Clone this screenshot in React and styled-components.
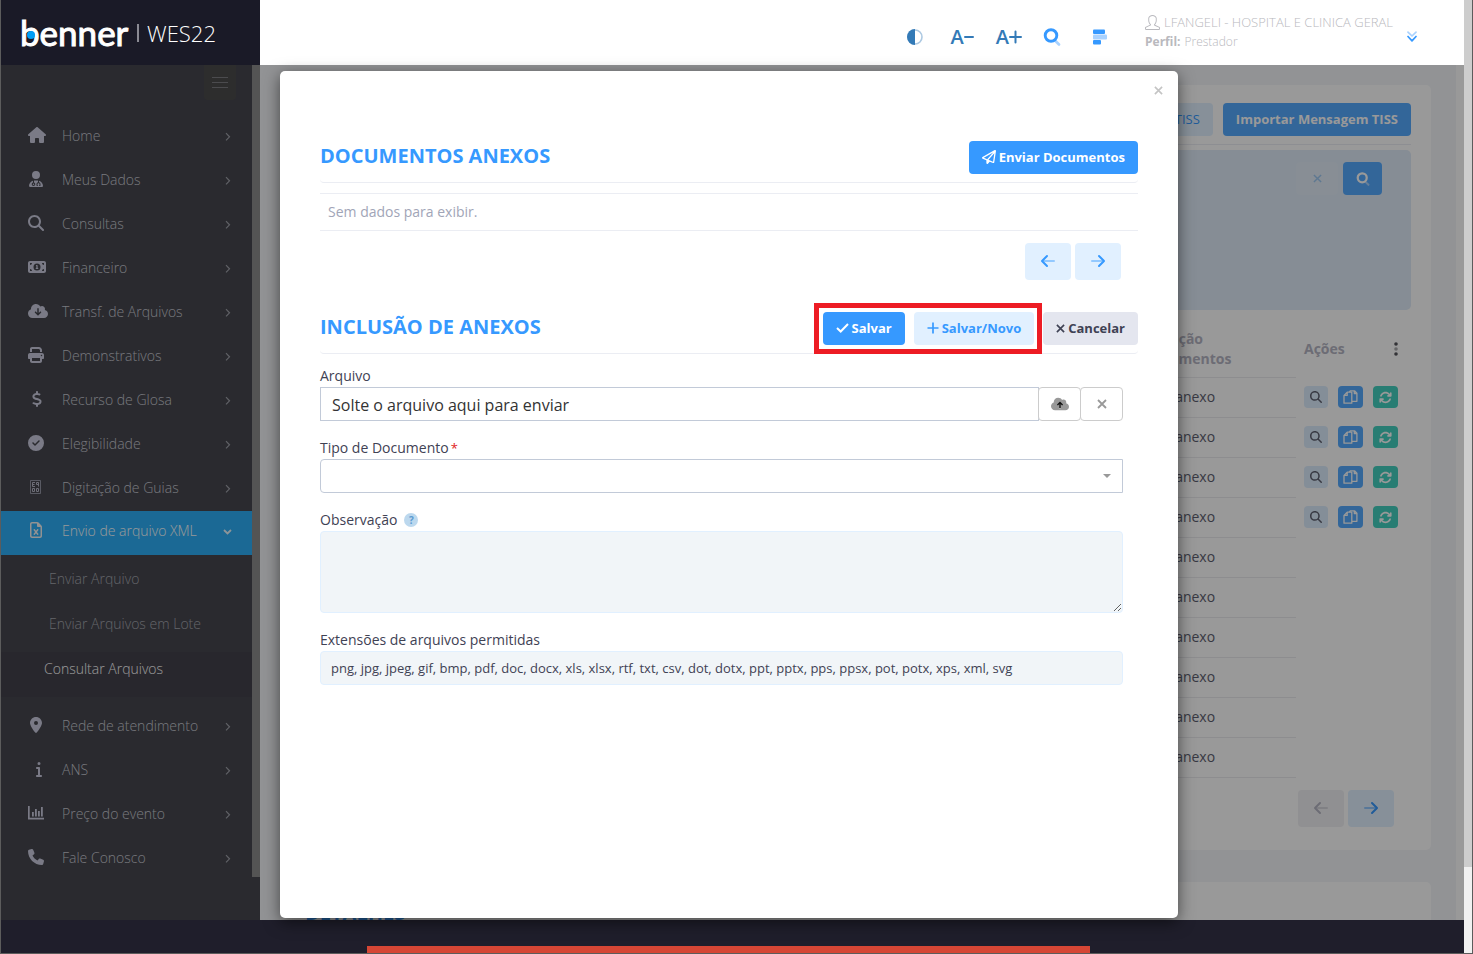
import React from "react";
import styled, { createGlobalStyle, css } from "styled-components";
import {
  FaHouse, FaUserDoctor, FaMagnifyingGlass, FaMoneyBill1, FaCloudArrowDown, FaPrint,
  FaDollarSign, FaCircleCheck, FaRegFileExcel, FaLocationDot, FaInfo, FaPhone,
  FaRegPaperPlane, FaCloudArrowUp, FaArrowsRotate,
} from "react-icons/fa6";
import { SlUser } from "react-icons/sl";

const Global = createGlobalStyle`
  *, *::before, *::after { box-sizing: border-box; }
  body { margin: 0; background: #fff; color: #3f4047; font: 400 14px/20px "Open Sans", "Noto Sans", sans-serif; }
  button, input, textarea, select { font: inherit; color: inherit; margin: 0; }
  button { cursor: pointer; }
  svg { display: block; flex: none; }
`;

const Frame = styled.div`
  display: flex;
  height: 100vh;
  min-height: 700px;
  border: solid #5c5c5c;
  border-width: 0 1px 1px 1px;
`;
const Page = styled.div`
  flex: 1;
  min-width: 0;
  display: flex;
  flex-direction: column;
`;
const Scrollbar = styled.div`
  width: 8px;
  background: #f1f1f1;
`;
const Thumb = styled.div`
  height: 91%;
  background: #cdcdcd;
`;

/* ---------- header ---------- */
const Header = styled.header`
  display: flex;
  height: 65px;
  flex: none;
`;
const Brand = styled.a`
  display: flex;
  align-items: center;
  justify-content: space-between;
  width: 259px;
  padding: 0 44px 0 19px;
  background: #1a1a27;
  color: #fff;
  text-decoration: none;
`;
const Logo = styled.span`
  position: relative;
  padding-bottom: 2px;
  font: 400 35px/40px Lato, sans-serif;
  -webkit-text-stroke: 1px #fff;
  &::after {
    content: "";
    position: absolute;
    left: 7px;
    top: 19px;
    width: 8px;
    height: 8px;
    border-radius: 50%;
    background: #009ef7;
  }
`;
const BrandRule = styled.span`
  width: 2px;
  height: 18px;
  background: #8a8a93;
`;
const BrandName = styled.span`
  font-size: 22px;
  line-height: 30px;
  font-weight: 300;
`;
const Tools = styled.div`
  flex: 1;
  display: flex;
  align-items: center;
  justify-content: flex-end;
  padding: 8px 47px 0 0;
  background: #fff;
`;
const ToolButton = styled.button`
  display: flex;
  align-items: center;
  height: 32px;
  padding: 0;
  margin-right: ${(p) => p.$gap}px;
  border: 0;
  background: none;
  color: ${(p) => (p.$bright ? "#3699ff" : "#337ab7")};
  font-size: 20px;
  font-weight: 600;
`;
const Account = styled.div`
  width: 262px;
  padding-bottom: 9px;
  color: #b9b9be;
  font-weight: 300;
  line-height: 20px;
`;
const AccountLine = styled.div`
  display: flex;
  align-items: center;
  gap: 4px;
  white-space: nowrap;
  font-size: ${(p) => (p.$small ? 12 : 13)}px;
`;
const Bold = styled.b`
  font-weight: 700;
`;

/* ---------- sidebar ---------- */
const Body = styled.div`
  position: relative;
  flex: 1;
  min-height: 0;
  display: flex;
  background: #f3f5f8;
`;
const Sidebar = styled.nav`
  display: flex;
  width: 259px;
  flex: none;
  background: #46474f;
  overflow: hidden;
`;
const Menu = styled.div`
  flex: 1;
`;
const SideTrack = styled.div`
  width: 8px;
  height: 95%;
  background: #8d8d8d;
`;
const Burger = styled.button`
  display: flex;
  flex-direction: column;
  justify-content: center;
  gap: 4px;
  width: 32px;
  height: 35px;
  margin: 0 16px 15px auto;
  padding: 0 8px;
  border: 0;
  border-radius: 0 0 4px 4px;
  background: #4c4c4c;
  span { height: 1px; background: #7d7d82; }
`;
const NavList = styled.ul`
  list-style: none;
  margin: 0;
  padding: 0;
`;
const NavItem = styled.a`
  display: flex;
  align-items: center;
  height: 44px;
  padding: 0 20px ${(p) => (p.$active ? 4 : 2)}px 27px;
  color: ${(p) => (p.$active ? "#fff" : "#c8c9d2")};
  background: ${(p) => (p.$active ? "#2daff8" : "transparent")};
  font-weight: 300;
  text-decoration: none;
`;
const NavIcon = styled.span`
  display: flex;
  width: 34px;
  padding-left: ${(p) => p.$inset || 0}px;
  padding-bottom: 2px;
  color: ${(p) => (p.$active ? "#f4f4f4" : "#cbccdf")};
`;
const NavLabel = styled.span`
  flex: 1;
`;
const SubList = styled(NavList)`
  padding: 7px 0 8px;
`;
const SubItem = styled.a`
  display: block;
  height: 45px;
  padding: 7px 0 0 ${(p) => (p.$current ? 43 : 48)}px;
  background: ${(p) => (p.$current ? "#44424c" : "transparent")};
  color: ${(p) => (p.$current ? "#fff" : "#a6a7b0")};
  font-weight: 300;
  text-decoration: none;
`;

/* ---------- listing behind the dialog ---------- */
const Content = styled.main`
  flex: 1;
  min-width: 0;
  overflow: hidden;
  padding: 20px 25px 0 20px;
  border-right: 8px solid #fff;
`;
const Card = styled.section`
  padding: 17px 20px 23px;
  margin-bottom: 32px;
  border-radius: 5px;
  background: #fff;
`;
const CardHead = styled.div`
  display: flex;
  justify-content: flex-end;
  align-items: center;
  gap: 10px;
  height: 43px;
  padding-bottom: 8px;
  margin-bottom: 5px;
  border-bottom: 1px solid #ebedf3;
`;
const Filter = styled.div`
  display: flex;
  justify-content: flex-end;
  align-items: flex-start;
  gap: 5px;
  height: 160px;
  padding: 12px 29px;
  border-radius: 5px;
  background: #dfebf8;
`;
const variants = {
  primary: css`background: #3699ff; color: #fff;`,
  light: css`background: #e1f0ff; color: #3699ff;`,
  soft: css`background: #55aaff; color: #fff;`,
  ghost: css`background: #e3edf8; color: #9dc8f2;`,
  neutral: css`background: #e4e6ef; color: #3f4254;`,
  muted: css`background: #f1f1f3; color: #b5b5c3;`,
  view: css`background: #dcedfd; color: #5e6070;`,
  teal: css`background: #43d0c0; color: #fff;`,
};
const Button = styled.button`
  display: inline-flex;
  align-items: center;
  justify-content: center;
  gap: 3px;
  height: 33px;
  padding: 0 13px;
  border: 0;
  border-radius: 4px;
  font-size: 13px;
  font-weight: ${(p) => (p.$plain ? 400 : 700)};
  white-space: nowrap;
  ${(p) => variants[p.$variant]}
`;
const SquareButton = styled(Button)`
  padding: 0;
  width: ${(p) => p.$width}px;
  height: ${(p) => p.$height || 33}px;
`;
const Table = styled.table`
  width: 100%;
  margin-top: 11px;
  border-collapse: collapse;
  table-layout: fixed;
  th, td { text-align: left; padding: 0 8px; }
  th { height: 56px; color: #b5b5c3; font-weight: 700; vertical-align: middle; }
  td { height: 40px; color: #5e6070; }
  th:nth-child(-n + 2), td:nth-child(-n + 2) { border-bottom: 1px solid #ebebee; }
`;
const ColStatus = styled.col`width: 161px;`;
const ColActions = styled.col`width: 115px;`;
const Split = styled.div`
  display: flex;
  align-items: center;
  justify-content: space-between;
  padding-right: 5px;
  svg { color: #55555c; }
`;
const RowActions = styled.div`
  display: flex;
  gap: 10px;
`;
const Pager = styled.div`
  display: flex;
  justify-content: flex-end;
  gap: 4px;
  padding: 12px 17px 0 0;
  svg { margin-bottom: 1px; }
`;
const Title = styled.h2`
  flex: 1;
  margin: 0;
  color: #3699ff;
  font-size: 20px;
  line-height: 28px;
  font-weight: 700;
`;
const CardTitle = styled(Title)`
  padding-left: 5px;
`;

/* ---------- dialog ---------- */
const Backdrop = styled.div`
  position: absolute;
  inset: 0;
  display: flex;
  justify-content: center;
  padding: 6px 7px 2px 0;
  background: rgba(0, 0, 0, 0.4);
`;
const Dialog = styled.section`
  width: 100%;
  max-width: 898px;
  padding: 7px 40px 0;
  border-radius: 5px;
  background: #fff;
  box-shadow: 0 4px 16px rgba(0, 0, 0, 0.55);
`;
const CloseRow = styled.div`
  display: flex;
  justify-content: flex-end;
  height: 63px;
  margin-right: -28px;
`;
const Close = styled.button`
  width: 16px;
  height: 24px;
  display: flex;
  align-items: center;
  justify-content: center;
  padding: 0;
  border: 0;
  background: none;
  color: #c4c4c4;
`;
const SectionHead = styled.div`
  display: flex;
  align-items: center;
  height: 42px;
  padding-bottom: 9px;
  border-bottom: 1px solid #ebedf3;
  border-radius: 4px;
  ${Title} { padding-bottom: 2px; }
`;
const FormHead = styled(SectionHead)`
  margin-top: 32px;
`;
const Empty = styled.p`
  margin: 10px 0 0;
  padding: 8px;
  height: 38px;
  border: solid #ebedf3;
  border-width: 1px 0;
  color: #a1a5b7;
`;
const Actions = styled.div`
  display: flex;
  gap: 9px;
`;
const Highlighted = styled.div`
  position: relative;
  display: flex;
  gap: 9px;
  &::after {
    content: "";
    position: absolute;
    inset: -9px -8px -9px -9px;
    border: 5px solid #ed1c24;
    pointer-events: none;
  }
`;
const Form = styled.form`
  display: flex;
  flex-direction: column;
  padding: 12px 15px 0 0;
`;
const Field = styled.div`
  display: flex;
  flex-direction: column;
  margin-bottom: 17px;
`;
const Label = styled.label`
  display: flex;
  align-items: center;
  height: 21px;
  padding-bottom: 2px;
  gap: 2px;
  color: #3f4254;
`;
const Required = styled.span`
  color: #e02222;
  font-size: 13px;
`;
const Help = styled.span`
  width: 14px;
  height: 14px;
  margin-left: 5px;
  border-radius: 50%;
  background: #bcd8ee;
  color: #5b9bd1;
  font-size: 10px;
  line-height: 14px;
  font-weight: 700;
  text-align: center;
`;
const inputLook = css`
  width: 100%;
  height: 34px;
  border: 1px solid #c2cad8;
  background: #fff;
  outline: 0;
`;
const FileRow = styled.div`
  display: flex;
`;
const FileInput = styled.input`
  ${inputLook}
  flex: 1;
  padding: 2px 11px 0;
  font-size: 16px;
  color: #333;
`;
const Addon = styled.button`
  display: flex;
  align-items: center;
  justify-content: center;
  width: 43px;
  height: 34px;
  margin-left: -1px;
  padding: 0;
  border: 1px solid #ccc;
  border-radius: 4px;
  background: #fff;
  color: #999;
`;
const UploadIcon = styled(FaCloudArrowUp)`
  background: linear-gradient(#111, #111) center / 7px 8px no-repeat;
`;
const SelectWrap = styled.div`
  position: relative;
  svg { position: absolute; right: 12px; top: 15px; pointer-events: none; }
`;
const Select = styled.select`
  ${inputLook}
  display: block;
  appearance: none;
  border-radius: 4px 0 0 4px;
`;
const TextArea = styled.textarea`
  ${inputLook}
  display: block;
  height: 82px;
  padding: 6px 10px;
  border: 1px solid #e1f0ff;
  border-radius: 4px;
  background: #f1f5f8;
`;
const ReadOnly = styled.input`
  ${inputLook}
  padding: 0 10px;
  border: 1px solid #e1f0ff;
  border-radius: 4px;
  background: #f1f5f8;
  font-size: 13px;
  color: #3f4254;
`;

/* ---------- footer ---------- */
const Footer = styled.footer`
  display: flex;
  align-items: flex-end;
  justify-content: center;
  flex: none;
  height: 33px;
  padding-right: 8px;
  background: #1f1e2b;
`;
const Alert = styled.div`
  width: 723px;
  max-width: 100%;
  height: 7px;
  background: #d64635;
`;

/* ---------- icons ---------- */
const Cross = ({ size = 9, w = 1.6 }) => (
  <svg width={size} height={size} viewBox="0 0 10 10" fill="none" stroke="currentColor" strokeWidth={w}>
    <path d="M1 1l8 8M9 1l-8 8" />
  </svg>
);
const Arrow = ({ flip }) => (
  <svg width="16" height="14" viewBox="0 0 16 14" fill="none" stroke="currentColor" strokeWidth="2" strokeLinecap="round" strokeLinejoin="round">
    <g transform={flip ? "translate(16 0) scale(-1 1)" : undefined}>
      <path d="M2 7h10" opacity=".45" />
      <path d="M9 2l5 5-5 5" />
    </g>
  </svg>
);
const Chevron = ({ down }) => (
  <svg width="9" height="9" viewBox="0 0 9 9" fill="none" stroke="currentColor" strokeWidth={down ? 1.8 : 1.2} opacity={down ? 0.9 : 0.7}>
    {down ? <path d="M1 3l3.500 3.500L8 3" /> : <path d="M3 1.200l3.500 3.600L3 8.400" />}
  </svg>
);
const Lens = ({ size = 18, tail = "#a9d2ff" }) => (
  <svg width={size} height={size} viewBox="0 0 18 18" fill="none" strokeLinecap="round">
    <path d="M12.500 13l3.500 3.500" stroke={tail} strokeWidth="2.600" />
    <circle cx="8" cy="7.500" r="5.800" stroke="currentColor" strokeWidth="2.900" />
  </svg>
);
const Contrast = () => (
  <svg width="16" height="18" viewBox="0 0 16 18">
    <circle cx="8" cy="9" r="7" fill="none" stroke="#adc9e2" strokeWidth="1.600" />
    <path d="M8 1a8 8 0 000 16z" fill="#337ab7" />
  </svg>
);
const Sign = ({ plus }) => (
  <svg width={plus ? 13 : 10} height="14" viewBox={plus ? "0 0 13 14" : "0 0 10 14"} stroke="currentColor" strokeWidth="2" strokeLinecap="round">
    {plus ? <path d="M1 7h11M6.500 1.500v11" /> : <path d="M1 7h8" />}
  </svg>
);
const Bars = () => (
  <svg width="14" height="16" viewBox="0 0 14 16">
    <rect x="0" y="5.500" width="14" height="5" rx="1" fill="#a9d2ff" />
    <rect x="0" y="0.500" width="12" height="4.500" rx="1" fill="#3699ff" />
    <rect x="0" y="11" width="8" height="4.500" rx="1" fill="#3699ff" />
  </svg>
);
const DoubleChevron = () => (
  <svg width="10" height="12" viewBox="0 0 10 12" fill="none" strokeWidth="1.700" strokeLinecap="round" strokeLinejoin="round">
    <path d="M1 1.200l4 3.800 4-3.800" stroke="#a9d2ff" />
    <path d="M1 5.500l4 4.300 4-4.300" stroke="#3699ff" />
  </svg>
);
const Chart = () => (
  <svg width="16" height="16" viewBox="0 0 16 16" fill="currentColor">
    <path d="M0 1h1.700v11.800H16V14.500H0zM4 7h1.800v4.500H4zM7 4h1.800v7.500H7zM10 6h1.800v5.500H10zM13 2h1.800v9.500H13z" />
  </svg>
);
const BoxGlyph = () => (
  <svg width="11" height="14" viewBox="0 0 11 14" fill="none" stroke="currentColor" strokeWidth="1" opacity=".85">
    <path d="M.5.5h10v13H.5z" opacity=".7" />
    <path d="M5 2.500H2.500v4H5M2.500 4.500h2M8.500 6.500v-4h-2v2h2M2.500 8.500h2v3h-2zM6.500 8.500h2v3h-2z" />
  </svg>
);
const Files = () => (
  <svg width="15" height="14" viewBox="0 0 15 14" fill="none" stroke="currentColor" strokeWidth="1.300" strokeLinejoin="round">
    <path d="M4.200 2.200H8.800V13.200H1V5.400zM4.200 2.200v3.200H1" />
    <path d="M6.300 2L7.500.8h4l2.400 2.500v8H9M11.300.8v2.700h2.600" />
  </svg>
);
const Dots = () => (
  <svg width="4" height="14" viewBox="0 0 4 14" fill="currentColor">
    <circle cx="2" cy="2" r="1.800" />
    <circle cx="2" cy="7" r="1.800" opacity=".5" />
    <circle cx="2" cy="12" r="1.800" />
  </svg>
);
const Check = () => (
  <svg width="13" height="10" viewBox="0 0 13 10" fill="none" stroke="currentColor" strokeWidth="2">
    <path d="M1 5l3.700 3.500L12 1" />
  </svg>
);
const Plus = () => (
  <svg width="12" height="12" viewBox="0 0 12 12" stroke="currentColor" strokeWidth="1.700">
    <path d="M6 .5v11M.5 6h11" />
  </svg>
);

const before = [
  ["Home", <FaHouse size={18} />],
  ["Meus Dados", <FaUserDoctor size={16} />],
  ["Consultas", <FaMagnifyingGlass size={16} />],
  ["Financeiro", <FaMoneyBill1 size={18} />],
  ["Transf. de Arquivos", <FaCloudArrowDown size={20} />],
  ["Demonstrativos", <FaPrint size={16} />],
  ["Recurso de Glosa", <FaDollarSign size={16} />, 1],
  ["Elegibilidade", <FaCircleCheck size={16} />],
  ["Digitação de Guias", <BoxGlyph />, 2],
];
const after = [
  ["Rede de atendimento", <FaLocationDot size={16} />],
  ["ANS", <FaInfo size={16} />, 3],
  ["Preço do evento", <Chart />],
  ["Fale Conosco", <FaPhone size={16} />],
];

const Entry = ({ item: [label, icon, inset], active }) => (
  <li>
    <NavItem href="#" $active={active}>
      <NavIcon $inset={inset} $active={active}>{icon}</NavIcon>
      <NavLabel>{label}</NavLabel>
      <Chevron down={active} />
    </NavItem>
  </li>
);

const PagerButtons = ({ first }) => (
  <Pager>
    <SquareButton $variant={first ? "muted" : "light"} $width={46} $height={37} aria-label="Anterior"><Arrow flip /></SquareButton>
    <SquareButton $variant="light" $width={46} $height={37} aria-label="Próxima"><Arrow /></SquareButton>
  </Pager>
);

export default function App() {
  return (
    <Frame>
      <Global />
      <Page>
        <Header>
          <Brand href="#">
            <Logo>benner</Logo>
            <BrandRule />
            <BrandName>WES22</BrandName>
          </Brand>
          <Tools>
            <ToolButton $gap={28} aria-label="Contraste"><Contrast /></ToolButton>
            <ToolButton $gap={22} aria-label="Diminuir fonte">A<Sign /></ToolButton>
            <ToolButton $gap={21} aria-label="Aumentar fonte">A<Sign plus /></ToolButton>
            <ToolButton $gap={32} $bright aria-label="Pesquisar"><Lens /></ToolButton>
            <ToolButton $gap={38} aria-label="Painel"><Bars /></ToolButton>
            <Account>
              <AccountLine><SlUser size={15} />LFANGELI - HOSPITAL E CLINICA GERAL</AccountLine>
              <AccountLine $small><Bold>Perfil:</Bold>Prestador</AccountLine>
            </Account>
            <ToolButton $gap={0} aria-label="Expandir"><DoubleChevron /></ToolButton>
          </Tools>
        </Header>

        <Body>
          <Sidebar>
            <Menu>
              <Burger aria-label="Menu"><span /><span /><span /></Burger>
              <NavList>
                {before.map((i) => <Entry key={i[0]} item={i} />)}
                <Entry item={["Envio de arquivo XML", <FaRegFileExcel size={16} />]} active />
                <li>
                  <SubList>
                    <li><SubItem href="#">Enviar Arquivo</SubItem></li>
                    <li><SubItem href="#">Enviar Arquivos em Lote</SubItem></li>
                    <li><SubItem href="#" $current>Consultar Arquivos</SubItem></li>
                  </SubList>
                </li>
                {after.map((i) => <Entry key={i[0]} item={i} />)}
              </NavList>
            </Menu>
            <SideTrack />
          </Sidebar>

          <Content>
            <Card>
              <CardHead>
                <Button $variant="light" $plain>Mensagem TISS</Button>
                <Button $variant="soft">Importar Mensagem TISS</Button>
              </CardHead>
              <Filter>
                <SquareButton $variant="ghost" $width={42} aria-label="Limpar"><Cross /></SquareButton>
                <SquareButton $variant="soft" $width={39} aria-label="Pesquisar"><Lens size={14} tail="#a9d2ff" /></SquareButton>
              </Filter>
              <Table>
                <colgroup><col /><ColStatus /><ColActions /></colgroup>
                <thead>
                  <tr>
                    <th />
                    <th>Situação<br />Documentos</th>
                    <th><Split>Ações<Dots /></Split></th>
                  </tr>
                </thead>
                <tbody>
                  {Array.from({ length: 10 }, (_, i) => (
                    <tr key={i}>
                      <td />
                      <td>Sem anexo</td>
                      <td>
                        {i < 4 && (
                          <RowActions>
                            <SquareButton $variant="view" $width={24} $height={22} aria-label="Visualizar"><FaMagnifyingGlass size={12} /></SquareButton>
                            <SquareButton $variant="soft" $width={25} $height={22} aria-label="Documentos"><Files /></SquareButton>
                            <SquareButton $variant="teal" $width={25} $height={22} aria-label="Atualizar"><FaArrowsRotate size={13} /></SquareButton>
                          </RowActions>
                        )}
                      </td>
                    </tr>
                  ))}
                </tbody>
              </Table>
              <PagerButtons first />
            </Card>
            <Card>
              <CardTitle>DETALHES</CardTitle>
            </Card>
          </Content>

          <Backdrop>
            <Dialog role="dialog" aria-label="Documentos anexos">
              <CloseRow><Close aria-label="Fechar"><Cross size={9} w={1.8} /></Close></CloseRow>
              <SectionHead>
                <Title>DOCUMENTOS ANEXOS</Title>
                <Button $variant="primary"><FaRegPaperPlane size={14} />Enviar Documentos</Button>
              </SectionHead>
              <Empty>Sem dados para exibir.</Empty>
              <PagerButtons />
              <FormHead>
                <Title>INCLUSÃO DE ANEXOS</Title>
                <Actions>
                  <Highlighted>
                    <Button $variant="primary"><Check />Salvar</Button>
                    <Button $variant="light"><Plus />Salvar/Novo</Button>
                  </Highlighted>
                  <Button $variant="neutral"><Cross size={9} w={1.8} />Cancelar</Button>
                </Actions>
              </FormHead>
              <Form onSubmit={(e) => e.preventDefault()}>
                <Field>
                  <Label htmlFor="arquivo">Arquivo</Label>
                  <FileRow>
                    <FileInput id="arquivo" readOnly defaultValue="Solte o arquivo aqui para enviar" />
                    <Addon type="button" aria-label="Selecionar arquivo"><UploadIcon size={18} /></Addon>
                    <Addon type="button" aria-label="Remover arquivo"><Cross size={10} w={1.8} /></Addon>
                  </FileRow>
                </Field>
                <Field>
                  <Label htmlFor="tipo">Tipo de Documento<Required>*</Required></Label>
                  <SelectWrap>
                    <Select id="tipo" />
                    <svg width="8" height="4" viewBox="0 0 8 4" fill="#999"><path d="M0 0h8L4 4z" /></svg>
                  </SelectWrap>
                </Field>
                <Field>
                  <Label htmlFor="obs">Observação<Help>?</Help></Label>
                  <TextArea id="obs" />
                </Field>
                <Field>
                  <Label htmlFor="ext">Extensões de arquivos permitidas</Label>
                  <ReadOnly id="ext" readOnly defaultValue="png, jpg, jpeg, gif, bmp, pdf, doc, docx, xls, xlsx, rtf, txt, csv, dot, dotx, ppt, pptx, pps, ppsx, pot, potx, xps, xml, svg" />
                </Field>
              </Form>
            </Dialog>
          </Backdrop>
        </Body>

        <Footer><Alert /></Footer>
      </Page>
      <Scrollbar><Thumb /></Scrollbar>
    </Frame>
  );
}
